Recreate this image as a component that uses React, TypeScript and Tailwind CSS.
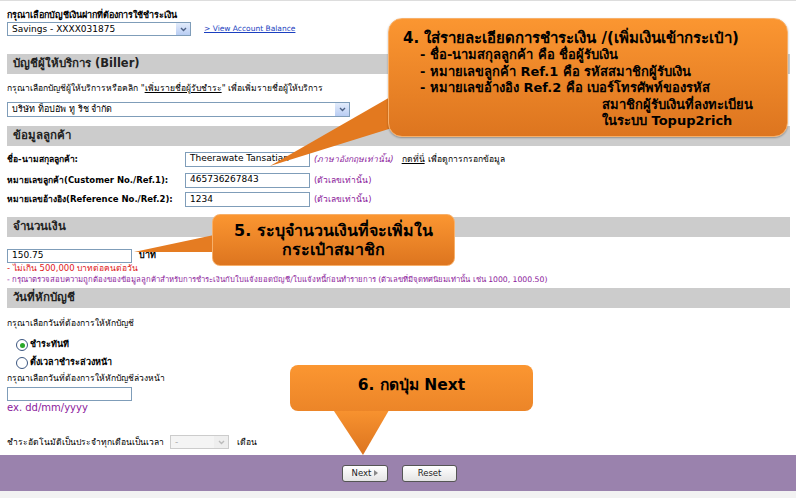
import React from "react";

function SelectBox({ value, className, disabled }: { value: string; className: string; disabled?: boolean }) {
  return (
    <div
      className={`flex items-center justify-between border ${
        disabled ? "border-[#ccc] bg-[#f4f4f4] text-[#aaa]" : "border-[#7f9db9] bg-white text-black"
      } ${className}`}
    >
      <span className="pl-1 text-[9px] leading-none">{value}</span>
      <span
        className={`flex h-full w-[14px] items-center justify-center ${
          disabled ? "bg-[#eee]" : "bg-gradient-to-b from-[#e3ecfb] to-[#b9cdf3]"
        }`}
      >
        <svg width="7" height="5" viewBox="0 0 7 5">
          <path d="M1 1 L3.5 3.5 L6 1" fill="none" stroke={disabled ? "#bbb" : "#4d6185"} strokeWidth="1.4" />
        </svg>
      </span>
    </div>
  );
}

function SectionBar({ title }: { title: string }) {
  return (
    <div className="flex h-[20px] w-[783px] items-center bg-[#cccccc] pl-[6px] text-[11.5px] font-bold text-[#222]">
      {title}
    </div>
  );
}

function Field({ value, className }: { value?: string; className: string }) {
  return (
    <div className={`flex items-center border border-[#7f9db9] bg-white pl-1 text-[9px] text-black ${className}`}>
      {value}
    </div>
  );
}

function Radio({ checked, label }: { checked?: boolean; label: string }) {
  return (
    <div className="flex h-[18px] items-center gap-[2px] pl-[9px]">
      <span className="flex h-[12px] w-[12px] items-center justify-center rounded-full border border-[#3b5680] bg-white">
        {checked && <span className="h-[5px] w-[5px] rounded-full bg-[#2aa82a]" />}
      </span>
      <span className="text-[9px] font-bold">{label}</span>
    </div>
  );
}

export default function App() {
  return (
    <div
      className="relative h-[498px] w-[796px] overflow-hidden bg-white text-black"
      style={{ fontFamily: "Tahoma, 'DejaVu Sans', 'Noto Sans', sans-serif" }}
    >
      <div className="h-px w-full bg-[#dddddd]" />

      <div className="flex flex-col pl-[7px]">
        <div className="mt-[8px] h-[12px] text-[9px] font-bold leading-[12px]">กรุณาเลือกบัญชีเงินฝากที่ต้องการใช้ชำระเงิน</div>
        <div className="mt-[1px] flex items-center gap-[13px]">
          <SelectBox value="Savings - XXXX031875" className="h-[14px] w-[184px]" />
          <a className="text-[7.5px] text-[#1a3fc0] underline">&gt; View Account Balance</a>
        </div>

        <div className="mt-[18px]">
          <SectionBar title="บัญชีผู้ให้บริการ (Biller)" />
        </div>
        <div className="mt-[8px] h-[12px] text-[8.5px] leading-[12px]">
          กรุณาเลือกบัญชีผู้ให้บริการหรือคลิก "<span className="underline">เพิ่มรายชื่อผู้รับชำระ</span>" เพื่อเพิ่มรายชื่อผู้ให้บริการ
        </div>
        <div className="mt-[8px]">
          <SelectBox value="บริษัท ท็อปอัพ ทู ริช จำกัด" className="h-[15px] w-[343px]" />
        </div>

        <div className="mt-[9px]">
          <SectionBar title="ข้อมูลลูกค้า" />
        </div>
        <div className="mt-[2px] flex h-[22px] items-center">
          <span className="w-[178px] text-[8.5px] font-bold">ชื่อ-นามสกุลลูกค้า:</span>
          <Field value="Theerawate Tansatian" className="h-[15px] w-[125px]" />
          <span className="ml-[4px] text-[8.5px] italic text-[#8b1a9b]">(ภาษาอังกฤษเท่านั้น)</span>
          <span className="ml-[8px] text-[8.5px] underline">กดที่นี่</span>
          <span className="ml-[3px] text-[8.5px]">เพื่อดูการกรอกข้อมูล</span>
        </div>
        <div className="flex h-[20px] items-center">
          <span className="w-[178px] text-[8.5px] font-bold">หมายเลขลูกค้า(Customer No./Ref.1):</span>
          <Field value="465736267843" className="h-[15px] w-[125px]" />
          <span className="ml-[4px] text-[8.5px] text-[#8b1a9b]">(ตัวเลขเท่านั้น)</span>
        </div>
        <div className="flex h-[19px] items-center">
          <span className="w-[178px] text-[8.5px] font-bold">หมายเลขอ้างอิง(Reference No./Ref.2):</span>
          <Field value="1234" className="h-[15px] w-[125px]" />
          <span className="ml-[4px] text-[8.5px] text-[#8b1a9b]">(ตัวเลขเท่านั้น)</span>
        </div>

        <div className="mt-[8px]">
          <SectionBar title="จำนวนเงิน" />
        </div>
        <div className="mt-[12px] flex items-center">
          <Field value="150.75" className="h-[14px] w-[125px]" />
          <span className="ml-[7px] text-[9px] font-bold">บาท</span>
        </div>
        <div className="h-[11px] text-[8.5px] leading-[11px] text-[#e0201c]">- ไม่เกิน 500,000 บาทต่อคนต่อวัน</div>
        <div className="h-[11px] whitespace-nowrap text-[7.7px] leading-[11px] text-[#8b1a9b]">
          - กรุณาตรวจสอบความถูกต้องของข้อมูลลูกค้าสำหรับการชำระเงินกับใบแจ้งยอดบัญชี/ใบแจ้งหนี้ก่อนทำรายการ (ตัวเลขที่มีจุดทศนิยมเท่านั้น เช่น 1000, 1000.50)
        </div>

        <div className="mt-[3px]">
          <SectionBar title="วันที่หักบัญชี" />
        </div>
        <div className="mt-[9px] h-[12px] text-[8.5px] leading-[12px]">กรุณาเลือกวันที่ต้องการให้หักบัญชี</div>
        <div className="mt-[7px]">
          <Radio checked label="ชำระทันที" />
          <Radio label="ตั้งเวลาชำระล่วงหน้า" />
        </div>
        <div className="h-[12px] text-[8.5px] leading-[12px]">กรุณาเลือกวันที่ต้องการให้หักบัญชีล่วงหน้า</div>
        <div className="mt-[3px]">
          <Field className="h-[14px] w-[125px]" />
        </div>
        <div className="mt-[1px] h-[12px] text-[10px] leading-[12px] text-[#8b1a9b]">ex. dd/mm/yyyy</div>
        <div className="mt-[21px] flex h-[14px] items-center">
          <span className="text-[8.5px]">ชำระอัตโนมัติเป็นประจำทุกเดือนเป็นเวลา</span>
          <SelectBox value="-" disabled className="ml-[6px] h-[14px] w-[59px]" />
          <span className="ml-[8px] text-[8.5px]">เดือน</span>
        </div>
      </div>

      <div className="mt-[6px] flex h-[36px] w-full items-center justify-center gap-[14px] bg-[#9a82ad] pl-[3px]">
        <button className="flex h-[17px] w-[46px] items-center justify-center gap-[3px] rounded-[3px] border border-[#555] bg-gradient-to-b from-white to-[#e4e4e4] text-[8.5px] text-[#222]">
          Next
          <svg width="4" height="6" viewBox="0 0 4 6">
            <path d="M0 0 L4 3 L0 6 Z" fill="#888" />
          </svg>
        </button>
        <button className="flex h-[17px] w-[55px] items-center justify-center rounded-[3px] border border-[#555] bg-gradient-to-b from-white to-[#e4e4e4] text-[8.5px] text-[#222]">
          Reset
        </button>
      </div>
      <div className="h-[8px] w-full bg-[#f2f2f2]" />

      {/* callout pointers */}
      <svg className="absolute left-0 top-0" width="796" height="498" viewBox="0 0 796 498">
        <defs>
          <linearGradient id="og" x1="0" y1="0" x2="0" y2="1">
            <stop offset="0" stopColor="#fb9631" />
            <stop offset="1" stopColor="#dc741f" />
          </linearGradient>
        </defs>
        <polygon points="392,96 270,166 392,128" fill="#e3791f" />
        <polygon points="214,235 134,252 214,252" fill="#e57c22" />
        <polygon points="330,405 363,455 392,405" fill="url(#og)" />
      </svg>

      <div className="absolute left-[388px] top-[18px] flex h-[119px] w-[400px] flex-col rounded-[14px] border border-[#f7b06a] bg-gradient-to-b from-[#fb9631] to-[#dd751f] pl-[14px] pt-[10px] font-bold shadow-[0_1px_2px_rgba(0,0,0,0.3)]">
        <div className="text-[15px] leading-[18px]">4. ใส่รายละเอียดการชำระเงิน /(เพิ่มเงินเข้ากระเป๋า)</div>
        <div className="pl-[17px] text-[13px] leading-[16.5px]">
          <div>- ชื่อ-นามสกุลลูกค้า คือ ชื่อผู้รับเงิน</div>
          <div>- หมายเลขลูกค้า Ref.1 คือ รหัสสมาชิกผู้รับเงิน</div>
          <div>- หมายเลขอ้างอิง Ref.2 คือ เบอร์โทรศัพท์ของรหัส</div>
          <div className="pl-[182px]">สมาชิกผู้รับเงินที่ลงทะเบียน</div>
          <div className="pl-[182px]">ในระบบ Topup2rich</div>
        </div>
      </div>

      <div className="absolute left-[212px] top-[214px] flex h-[52px] w-[243px] flex-col items-center justify-center rounded-[8px] border border-[#f7b06a] bg-gradient-to-b from-[#fb9631] to-[#dd751f] text-[16px] font-bold leading-[19px]">
        <div>5. ระบุจำนวนเงินที่จะเพิ่มใน</div>
        <div>กระเป๋าสมาชิก</div>
      </div>

      <div className="absolute left-[290px] top-[365px] flex h-[46px] w-[243px] items-center justify-center rounded-[8px] bg-gradient-to-b from-[#fb9631] to-[#ec8528] pb-[5px] text-[15.5px] font-bold">
        6. กดปุ่ม Next
      </div>
    </div>
  );
}
